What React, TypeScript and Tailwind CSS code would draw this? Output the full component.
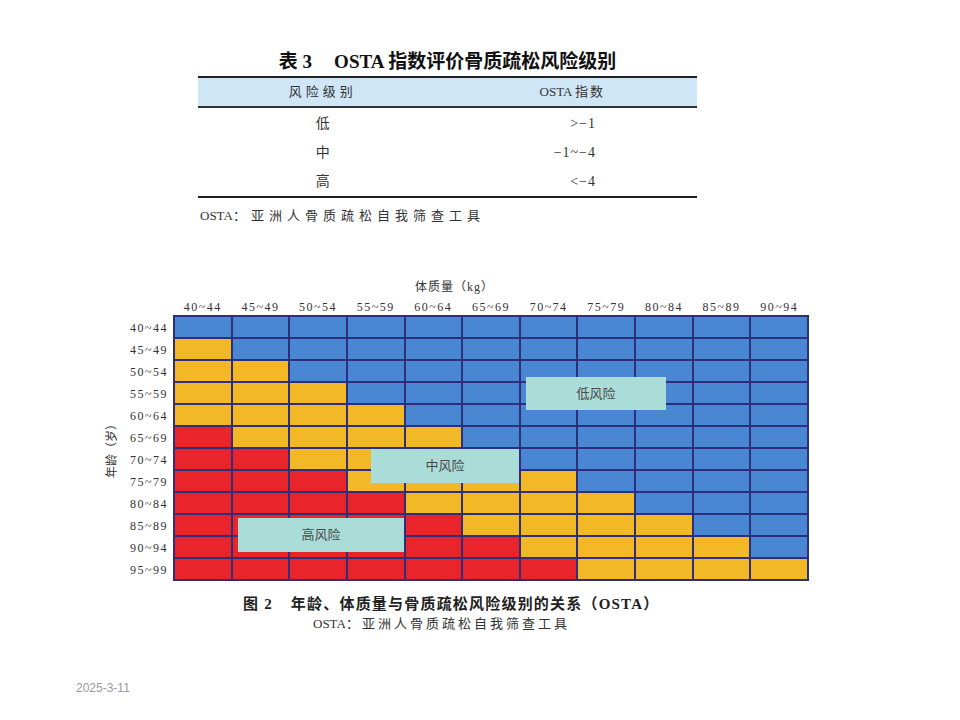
const WEIGHTS = ["40~44", "45~49", "50~54", "55~59", "60~64", "65~69", "70~74", "75~79", "80~84", "85~89", "90~94"];
const AGES = ["40~44", "45~49", "50~54", "55~59", "60~64", "65~69", "70~74", "75~79", "80~84", "85~89", "90~94", "95~99"];

const TABLE_ROWS = [
  { level: "低", value: ">−1" },
  { level: "中", value: "−1~−4" },
  { level: "高", value: "<−4" },
];

// low risk above the diagonal, high risk in the lower-left corner
function cellClass(row: number, col: number) {
  if (col >= row) return "bg-[#4a87d2]";
  if (col < row - 4) return "bg-[#e9252b]";
  return "bg-[#f2b826]";
}

function RiskLabel({ text, className }: { text: string; className: string }) {
  return (
    <div
      className={`absolute flex items-center justify-center bg-[#aadcd8] text-[13px] text-[#4a4a4a] ${className}`}
    >
      {text}
    </div>
  );
}

export default function App() {
  return (
    <div className="relative h-[720px] w-[960px] overflow-hidden bg-white font-['Liberation_Serif','Noto_Sans_CJK_SC',serif] text-[#2a2a2a]">
      {/* table 3 */}
      <section className="pl-[198px] pt-[48px]">
        <div className="w-[499px]">
          <h1 className="flex h-[28px] items-center justify-center text-[19px] font-bold text-[#111]">
            <span>表 3</span>
            <span className="ml-[22px]">OSTA 指数评价骨质疏松风险级别</span>
          </h1>
          <div className="border-y-2 border-[#222]">
            <div className="grid h-[30px] grid-cols-2 items-center border-b-2 border-[#333] bg-[#cfe6f6] text-[13px] text-[#333]">
              <div className="text-center tracking-[4px]">风险级别</div>
              <div className="text-center">
                OSTA <span className="tracking-[2px]">指数</span>
              </div>
            </div>
            <div className="pt-[1px]">
              {TABLE_ROWS.map((row) => (
                <div key={row.level} className="grid h-[29px] grid-cols-2 items-center text-[14px] text-[#333]">
                  <div className="text-center">{row.level}</div>
                  <div className="pr-[101px] text-right tracking-[1px]">{row.value}</div>
                </div>
              ))}
            </div>
          </div>
          <p className="flex h-[36px] items-center pl-[2px] text-[13px] text-[#333]">
            OSTA<span className="tracking-[5px]">：亚洲人骨质疏松自我筛查工具</span>
          </p>
        </div>
      </section>

      {/* figure 2 */}
      <section className="mt-[45px]">
        <div className="h-[16px] pl-[415px] text-[12px] leading-[16px] tracking-[1px] text-[#333]">
          体质量（kg）
        </div>
        <div className="ml-[173px] mt-[4px] grid h-[16px] w-[636px] grid-cols-11 gap-[2px] px-[2px] text-center text-[12px] leading-[16px] tracking-[1.5px] text-[#333]">
          {WEIGHTS.map((w) => (
            <span key={w}>{w}</span>
          ))}
        </div>
        <div className="flex pl-[102px]">
          <div className="flex w-[20px] items-center justify-center">
            <span className="-rotate-90 whitespace-nowrap text-[12px] text-[#333]">年龄（岁）</span>
          </div>
          <div className="flex w-[46px] flex-col pt-[2px] text-right text-[12px] tracking-[1.5px] text-[#333]">
            {AGES.map((a) => (
              <span key={a} className="flex h-[22px] items-center justify-end">
                {a}
              </span>
            ))}
          </div>
          <div className="relative ml-[5px] grid w-[636px] grid-cols-11 gap-[2px] bg-[#2d2f7c] p-[2px]">
            {AGES.map((a, r) =>
              WEIGHTS.map((w, c) => <div key={`${a}-${w}`} className={`h-[20px] ${cellClass(r, c)}`} />),
            )}
            <RiskLabel text="低风险" className="left-[353px] top-[62px] h-[33px] w-[140px]" />
            <RiskLabel text="中风险" className="left-[198px] top-[134px] h-[34px] w-[148px]" />
            <RiskLabel text="高风险" className="left-[65px] top-[203px] h-[34px] w-[166px]" />
          </div>
        </div>
        <p className="mt-[13px] h-[20px] pl-[243px] text-[15px] font-bold leading-[20px] tracking-[1.2px] text-[#222]">
          <span>图 2</span>
          <span className="ml-[18px]">年龄、体质量与骨质疏松风险级别的关系（OSTA）</span>
        </p>
        <p className="mt-[1px] h-[18px] pl-[313px] text-[13px] leading-[18px] text-[#333]">
          OSTA<span className="tracking-[3px]">：亚洲人骨质疏松自我筛查工具</span>
        </p>
      </section>

      <div className="mt-[48px] pl-[76px] font-['Liberation_Sans',sans-serif] text-[12px] leading-[14px] text-[#9a9a9a]">
        2025-3-11
      </div>
    </div>
  );
}
